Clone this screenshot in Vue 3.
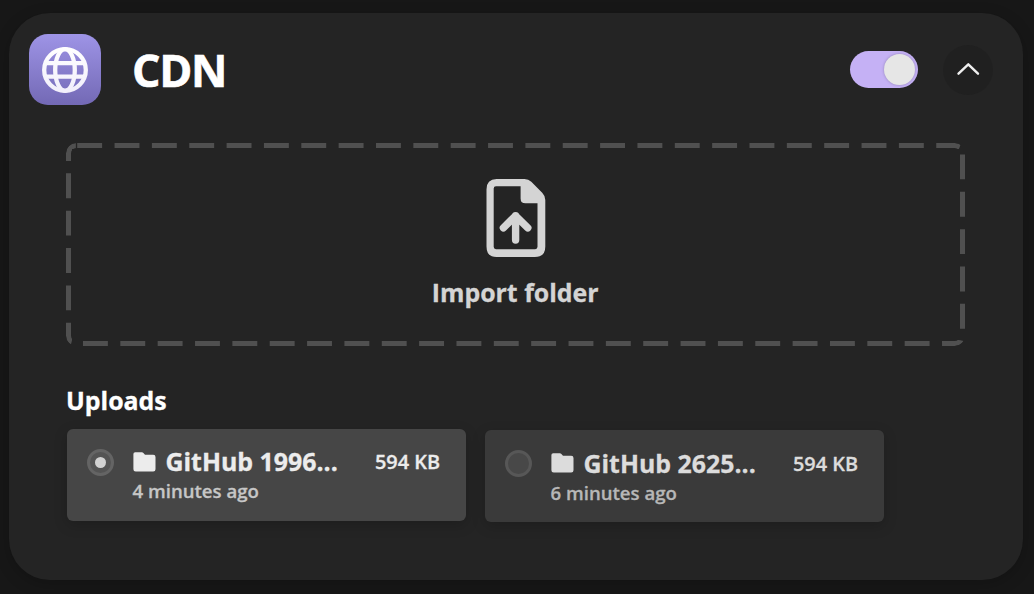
<script setup>
import { ref } from 'vue'

const enabled = ref(true)
const selected = ref(0)
const uploads = [
  { name: 'GitHub 1996...', size: '594 KB', time: '4 minutes ago' },
  { name: 'GitHub 2625...', size: '594 KB', time: '6 minutes ago' },
]
</script>

<template>
  <main class="page">
    <section class="panel">
      <header class="head">
        <div class="tile">
          <svg width="48" height="48" viewBox="0 0 48 48" fill="none" stroke="url(#globe)" stroke-width="4.3">
            <defs>
              <linearGradient id="globe" gradientUnits="userSpaceOnUse" x1="0" y1="0" x2="0" y2="48">
                <stop offset="0" stop-color="#ffffff" />
                <stop offset="1" stop-color="#f1eefb" />
              </linearGradient>
            </defs>
            <circle cx="24" cy="24" r="20.8" />
            <ellipse cx="24" cy="24" rx="9.8" ry="20.8" />
            <path d="M4.5 17.2H43.5M4.5 30.7H43.5" />
          </svg>
        </div>
        <h1 class="title">CDN</h1>
        <button class="toggle" :class="{ on: enabled }" @click="enabled = !enabled"><span class="knob"></span></button>
        <button class="collapse">
          <svg width="24" height="14" viewBox="0 0 24 14" fill="none" stroke="#efefef" stroke-width="2.4" stroke-linecap="round" stroke-linejoin="round">
            <path d="M2.5 11.7L12.3 2.3L22 11.7" />
          </svg>
        </button>
      </header>

      <div class="drop">
        <svg class="dashes" width="899" height="203" viewBox="0 0 899 203" fill="none">
          <mask id="frame" maskUnits="userSpaceOnUse" x="0" y="0" width="899" height="203">
            <rect x="2.5" y="2.5" width="894" height="198" rx="7.8" stroke="#fff" stroke-width="5" />
          </mask>
          <path mask="url(#frame)" d="M11.2 0H892.9A6.1 6.1 0 0 1 899 6.1V196.9A6.1 6.1 0 0 1 892.9 203H6.1A6.1 6.1 0 0 1 0 196.9V6.1A6.1 6.1 0 0 1 6.1 0H11.2" stroke="#505050" stroke-width="12" stroke-dasharray="24.9 12.45" />
        </svg>
        <svg class="file" width="60" height="78" viewBox="0 0 60 78">
          <path fill="#d4d4d4" fill-rule="evenodd" d="M10.5 0H38.5Q42.5 0 45.3 2.8L56.2 13.7Q59.3 16.8 59.3 21V67.5Q59.3 78 48.8 78H10.5Q.5 78 .5 67.5V10.5Q.5 0 10.5 0ZM10 7.3Q7.7 7.3 7.7 9.6V67.8Q7.7 70.2 10 70.2H49.2Q51.5 70.2 51.5 67.8V24.3H39.5Q34.6 24.3 34.6 19.4V7.3Z" />
          <path fill="none" stroke="#d4d4d4" stroke-width="7.4" stroke-linecap="round" stroke-linejoin="round" d="M29.6 61V36.8M17.4 48.8L29.6 36.8L41.8 48.8" />
        </svg>
        <div class="drop-text">Import folder</div>
      </div>

      <h2 class="subtitle">Uploads</h2>
      <div class="uploads">
        <article
          v-for="(u, i) in uploads"
          :key="i"
          class="upload"
          :class="{ active: selected === i }"
          @click="selected = i"
        >
          <span class="radio"></span>
          <div class="info">
            <div class="name">
              <svg width="23" height="20" viewBox="0 0 23 20">
                <path fill="currentColor" d="M2.2.3H8.8Q9.8.3 10.4 1L12 2.8H20.2Q22.5 2.8 22.5 5V17.2Q22.5 19.4 20.2 19.4H2.7Q.4 19.4.4 17.2V2.1Q.4.3 2.2.3Z" />
              </svg>
              <span>{{ u.name }}</span>
            </div>
            <div class="time">{{ u.time }}</div>
          </div>
          <span class="size">{{ u.size }}</span>
        </article>
      </div>
    </section>
  </main>
</template>

<style>
body {
  background: #171717;
}
</style>

<style scoped>
.page {
  box-sizing: border-box;
  width: 1034px;
  height: 594px;
  overflow: hidden;
  padding: 13px 11px 14px 9px;
  background: #171717;
  font-family: 'Open Sans', 'Noto Sans', sans-serif;
  -webkit-text-stroke: 0.3px currentColor;
}
.panel {
  box-sizing: border-box;
  height: 567px;
  padding: 21px 30px 0 20px;
  border-radius: 41px;
  background: #242424;
  box-shadow: 0 4px 16px rgba(0, 0, 0, 0.2);
}
.head {
  display: flex;
  align-items: center;
  height: 71px;
}
.tile {
  display: flex;
  align-items: center;
  justify-content: center;
  width: 72px;
  height: 71px;
  border-radius: 19px;
  background: linear-gradient(#9e94e6, #7369b5);
}
.title {
  flex: 1;
  margin: 1px 0 0 31px;
  font-size: 44.8px;
  line-height: 60px;
  font-weight: 700;
  letter-spacing: -1.3px;
  color: #fff;
  -webkit-text-stroke-width: 0.6px;
}
button {
  padding: 0;
  border: 0;
}
.toggle {
  box-sizing: border-box;
  display: flex;
  align-items: center;
  width: 68px;
  height: 37px;
  padding: 0 3px;
  border-radius: 19px;
  background: #555;
}
.toggle.on {
  justify-content: flex-end;
  background: #c5b1f5;
}
.knob {
  width: 31px;
  height: 31px;
  border-radius: 50%;
  background: #e6e6e6;
  box-shadow: 0 0 3px rgba(0, 0, 0, 0.25);
}
.collapse {
  box-sizing: border-box;
  display: flex;
  align-items: center;
  justify-content: center;
  width: 50px;
  height: 50px;
  margin-left: 25px;
  padding-bottom: 2px;
  border-radius: 50%;
  background: #202020;
}
.drop {
  position: relative;
  box-sizing: border-box;
  display: flex;
  flex-direction: column;
  align-items: center;
  width: 899px;
  height: 203px;
  margin: 38px 0 0 37.4px;
  padding-top: 36px;
  border-radius: 10px;
  overflow: hidden;
}
.dashes {
  position: absolute;
  inset: 0;
}
.drop-text {
  margin: 18px 1.5px 0 0;
  font-size: 24.9px;
  line-height: 34px;
  font-weight: 700;
  color: #d4d4d4;
}
.subtitle {
  margin: 37px 0 0 37px;
  font-size: 24.9px;
  line-height: 34px;
  font-weight: 700;
  color: #fff;
}
.uploads {
  display: flex;
  align-items: flex-start;
  gap: 19px;
  margin: 13px 0 0 37.5px;
}
.upload {
  box-sizing: border-box;
  display: flex;
  width: 399px;
  height: 92px;
  padding: 15.5px 25.5px 0 20px;
  border-radius: 6px;
  background: #3a3a3a;
  color: #dcdcdc;
  box-shadow: 0 4px 14px rgba(0, 0, 0, 0.18);
}
.upload.active {
  margin-top: -1.5px;
  background: #464646;
  color: #ececec;
}
.radio {
  box-sizing: border-box;
  display: flex;
  align-items: center;
  justify-content: center;
  width: 27px;
  height: 27px;
  margin-top: 4.5px;
  border: 3px solid #575757;
  border-radius: 50%;
  background: #484848;
}
.active .radio {
  border-color: #646464;
  background: #545454;
}
.active .radio::after {
  content: '';
  width: 11px;
  height: 11px;
  border-radius: 50%;
  background: #d2d2d2;
}
.info {
  flex: 1;
  margin-left: 19px;
}
.name {
  display: flex;
  align-items: center;
  gap: 10px;
  font-size: 24.9px;
  line-height: 34px;
  font-weight: 700;
}
.name svg {
  position: relative;
  top: 0.5px;
}
.time {
  font-size: 18.6px;
  line-height: 26px;
  font-weight: 600;
  color: #b7b7b7;
}
.active .time {
  color: #c6c6c6;
}
.size {
  margin-top: 1px;
  font-size: 19.9px;
  line-height: 33px;
  font-weight: 600;
}
</style>
